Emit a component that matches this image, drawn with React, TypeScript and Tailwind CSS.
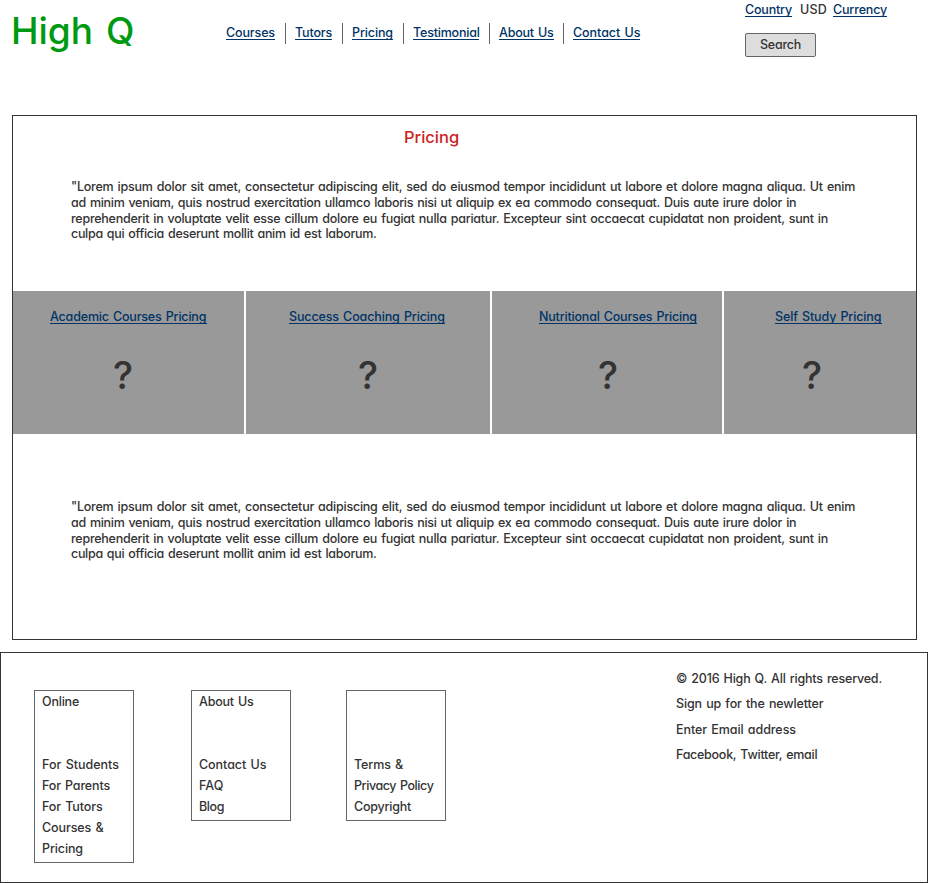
const navLinks = [
  { label: "Courses", cls: "w-[49px] mr-[10px] tracking-[-0.13px]" },
  { label: "Tutors", cls: "w-[37px] ml-[9px] mr-[10px] tracking-[-0.16px]" },
  { label: "Pricing", cls: "w-[41px] ml-[9px] mr-[10px] tracking-[-0.12px]" },
  { label: "Testimonial", cls: "w-[66px] ml-[9px] mr-[10px] tracking-[-0.2px]" },
  { label: "About Us", cls: "w-[55px] ml-[9px] mr-[9px] tracking-[-0.2px]" },
  { label: "Contact Us", cls: "w-[67px] ml-[9px] tracking-[-0.05px]" },
];

const cards = [
  { label: "Academic Courses Pricing", box: "w-[231px]", link: "ml-[37px] w-[157px] tracking-[-0.18px]", mark: "ml-[100px]" },
  { label: "Success Coaching Pricing", box: "w-[244px]", link: "ml-[43px] w-[156px] tracking-[-0.13px]", mark: "ml-[112px]" },
  { label: "Nutritional Courses Pricing", box: "w-[230px]", link: "ml-[47px] w-[158px] tracking-[-0.19px]", mark: "ml-[106px]" },
  { label: "Self Study Pricing", box: "w-[192px]", link: "ml-[51px] w-[107px] tracking-[-0.13px]", mark: "ml-[78px]" },
];

const lorem = [
  { text: "\"Lorem ipsum dolor sit amet, consectetur adipiscing elit, sed do eiusmod tempor incididunt ut labore et dolore magna aliqua. Ut enim", cls: "tracking-[-0.235px]" },
  { text: "ad minim veniam, quis nostrud exercitation ullamco laboris nisi ut aliquip ex ea commodo consequat. Duis aute irure dolor in", cls: "tracking-[-0.297px]" },
  { text: "reprehenderit in voluptate velit esse cillum dolore eu fugiat nulla pariatur. Excepteur sint occaecat cupidatat non proident, sunt in", cls: "tracking-[-0.253px]" },
  { text: "culpa qui officia deserunt mollit anim id est laborum.", cls: "tracking-[-0.305px]" },
];

const footerColumns = [
  {
    box: "h-[173px] ml-[33px]",
    title: "Online",
    titleCls: "tracking-[-0.2px]",
    items: [
      { text: "For Students", cls: "" },
      { text: "For Parents", cls: "tracking-[-0.15px]" },
      { text: "For Tutors", cls: "tracking-[-0.1px]" },
      { text: "Courses &", cls: "tracking-[-0.1px]" },
      { text: "Pricing", cls: "tracking-[-0.12px]" },
    ],
  },
  {
    box: "h-[131px] ml-[57px]",
    title: "About Us",
    titleCls: "tracking-[-0.2px]",
    items: [
      { text: "Contact Us", cls: "tracking-[-0.05px]" },
      { text: "FAQ", cls: "" },
      { text: "Blog", cls: "tracking-[-0.4px]" },
    ],
  },
  {
    box: "h-[131px] ml-[55px]",
    title: "",
    titleCls: "",
    items: [
      { text: "Terms &", cls: "tracking-[-0.1px]" },
      { text: "Privacy Policy", cls: "tracking-[-0.42px]" },
      { text: "Copyright", cls: "tracking-[-0.22px]" },
    ],
  },
];

function Link({ label, cls }: { label: string; cls: string }) {
  return (
    <a href="#" className={`block h-[15px] shrink-0 border-b border-[#003366] leading-[16px] text-[#003366] ${cls}`}>
      {label}
    </a>
  );
}

function Lorem() {
  return (
    <p className="ml-[58px] pt-px leading-[15.75px]">
      {lorem.map((l) => (
        <span key={l.text} className={`block ${l.cls}`}>
          {l.text}
        </span>
      ))}
    </p>
  );
}

export default function App() {
  return (
    <div className="h-[883px] w-[928px] overflow-hidden whitespace-nowrap bg-white font-['Inter','Liberation_Sans',sans-serif] text-[12.5px] font-medium text-[#333333] [font-feature-settings:'cv11'] [word-spacing:1px]">
      <header className="flex h-[115px]">
        <h1 className="w-[226px] pt-[8px] pl-[11px] text-[37px] leading-[46px] font-medium text-[#009a12] [word-spacing:3px]">High Q</h1>
        <nav className="flex h-[21px] w-[519px] mt-[23px]">
          {navLinks.map((l, i) => (
            <div key={l.label} className={i < navLinks.length - 1 ? "flex border-r border-[#666666] pt-[2px]" : "flex pt-[2px]"}>
              <Link label={l.label} cls={l.cls} />
            </div>
          ))}
        </nav>
        <div className="pt-[2px]">
          <div className="flex h-[15px]">
            <Link label="Country" cls="w-[47px] tracking-[-0.18px]" />
            <span className="ml-[8px] w-[33px] leading-[16px] tracking-[0.2px]">USD</span>
            <Link label="Currency" cls="w-[54px] tracking-[-0.16px]" />
          </div>
          <button className="mt-[16px] flex h-[24px] w-[71px] items-start justify-center rounded-[2px] border border-[#666666] bg-[#dddddd] leading-[21px] tracking-[-0.25px]">Search</button>
        </div>
      </header>

      <main className="ml-[12px] h-[525px] w-[905px] border border-[#333333]">
        <h2 className="h-[62px] pt-[10px] pl-[391px] text-[16.5px] leading-[22px] font-medium text-[#cc2222]">Pricing</h2>
        <div className="h-[113px]">
          <Lorem />
        </div>
        <section className="flex h-[143px] gap-[2px]">
          {cards.map((c) => (
            <div key={c.label} className={`bg-[#999999] pt-[18px] ${c.box}`}>
              <Link label={c.label} cls={c.link} />
              <div className={`mt-[28px] text-[38px] leading-[46px] ${c.mark}`}>?</div>
            </div>
          ))}
        </section>
        <div className="pt-[64px]">
          <Lorem />
        </div>
      </main>

      <footer className="mt-[12px] flex h-[231px] border border-[#333333]">
        {footerColumns.map((c) => (
          <div key={c.box} className={`mt-[37px] w-[100px] shrink-0 border border-[#666666] pl-[7px] leading-[21px] ${c.box}`}>
            <div className={`h-[63px] ${c.titleCls}`}>{c.title}</div>
            {c.items.map((item) => (
              <div key={item.text} className={item.cls}>
                {item.text}
              </div>
            ))}
          </div>
        ))}
        <div className="ml-[230px] pt-[13px] leading-[25.33px]">
          <div className="tracking-[-0.2px]">© 2016 High Q. All rights reserved.</div>
          <div className="tracking-[-0.13px]">Sign up for the newletter</div>
          <div className="tracking-[-0.07px]">Enter Email address</div>
          <div className="tracking-[-0.27px]">Facebook, Twitter, email</div>
        </div>
      </footer>
    </div>
  );
}
